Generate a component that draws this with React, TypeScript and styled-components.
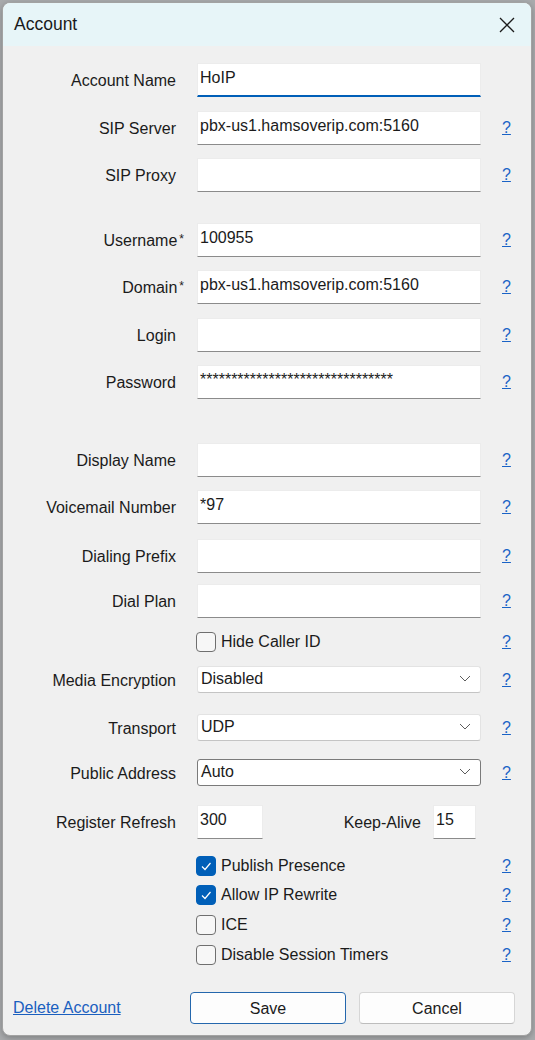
import React from 'react'
import styled, { createGlobalStyle } from 'styled-components'

const GlobalStyle = createGlobalStyle`
  html, body {
    margin: 0;
    padding: 0;
    background: #a9abad;
  }
  body {
    font-family: "Liberation Sans", Arial, sans-serif;
    color: #1b1b1b;
  }
`

const Page = styled.div`
  width: 535px;
  height: 1040px;
  box-sizing: border-box;
  padding: 2px 3px 4px 2px;
`

const Dialog = styled.div`
  height: 100%;
  box-sizing: border-box;
  background: #f0f0f0;
  border: 1px solid #a2a2a2;
  border-radius: 8px;
  overflow: hidden;
  display: flex;
  flex-direction: column;
  box-shadow: 0 2px 6px rgba(0, 0, 0, 0.25);
`

const TitleBar = styled.div`
  height: 43px;
  flex-shrink: 0;
  background: #e7f5f8;
  display: flex;
  align-items: center;
  justify-content: space-between;
  padding: 0 16px 0 11px;
  font-size: 17.5px;
`

const CloseButton = styled.div`
  width: 16px;
  height: 16px;
  display: flex;
`

const Form = styled.div`
  display: flex;
  flex-direction: column;
  padding-top: 17px;
`

const Row = styled.div<{ $mt?: number }>`
  display: grid;
  grid-template-columns: 173px 284px 1fr;
  column-gap: 21px;
  align-items: center;
  margin-top: ${({ $mt }) => $mt ?? 0}px;
`

const Label = styled.div`
  text-align: right;
  font-size: 16px;
  padding-top: 2px;
  white-space: nowrap;
`

const Required = styled.span`
  font-size: 12px;
  margin-left: 2px;
  margin-right: -8px;
  vertical-align: 3px;
`

const TextBox = styled.div<{ $focused?: boolean; $width?: number }>`
  width: ${({ $width }) => ($width ? `${$width}px` : '100%')};
  height: 34px;
  box-sizing: border-box;
  background: #fff;
  border: 1px solid #ececec;
  border-bottom: ${({ $focused }) => ($focused ? '2px solid #005fb8' : '1px solid #8b8b8b')};
  padding: 4px 2px 0;
  font-size: 16px;
  line-height: 19px;
  white-space: nowrap;
  overflow: hidden;
  flex-shrink: 0;
`

const Select = styled.div<{ $active?: boolean }>`
  height: 27px;
  box-sizing: border-box;
  background: #fff;
  border: 1px solid ${({ $active }) => ($active ? '#7a7a7a' : '#e3e3e3')};
  border-bottom-color: ${({ $active }) => ($active ? '#7a7a7a' : '#c4c4c4')};
  border-radius: 3px;
  display: flex;
  align-items: center;
  justify-content: space-between;
  padding: 0 9px 2px 3px;
  font-size: 16px;
`

const Help = styled.a`
  justify-self: start;
  font-size: 16px;
  color: #1a63c6;
  text-decoration: underline;
  cursor: pointer;
`

const Inline = styled.div`
  display: flex;
  align-items: center;
`

const InlineLabel = styled.div`
  flex: 1;
  text-align: right;
  font-size: 16px;
  padding: 2px 12px 0 0;
`

const CheckLine = styled.label`
  display: flex;
  align-items: center;
  gap: 5px;
  font-size: 16px;
  margin-left: -1px;
`

const Box = styled.span<{ $checked?: boolean }>`
  width: 20px;
  height: 20px;
  box-sizing: border-box;
  border-radius: 4px;
  border: 1px solid ${({ $checked }) => ($checked ? '#005fb8' : '#6f6f6f')};
  background: ${({ $checked }) => ($checked ? '#005fb8' : '#f7f7f7')};
  display: flex;
  align-items: center;
  justify-content: center;
`

const Footer = styled.div`
  display: grid;
  grid-template-columns: 174px 156px 156px;
  column-gap: 13px;
  align-items: center;
  margin-top: 27px;
`

const DeleteLink = styled.a`
  padding-left: 10px;
  font-size: 16px;
  color: #1a5fbf;
  text-decoration: underline;
  cursor: pointer;
`

const Button = styled.button<{ $primary?: boolean }>`
  height: 32px;
  border-radius: 4px;
  background: #fdfdfd;
  border: 1px solid ${({ $primary }) => ($primary ? '#2467ad' : '#d6d6d6')};
  border-bottom-color: ${({ $primary }) => ($primary ? '#2467ad' : '#bdbdbd')};
  font-family: inherit;
  font-size: 16px;
  color: #1b1b1b;
  padding: 1px 0 0;
`

const Chevron = () => (
  <svg width="12" height="7" viewBox="0 0 12 7">
    <polyline points="1,1 6,6 11,1" fill="none" stroke="#5c5c5c" strokeWidth="1" />
  </svg>
)

const Check = ({ checked, text }: { checked?: boolean; text: string }) => (
  <CheckLine>
    <Box $checked={checked}>
      {checked && (
        <svg width="14" height="14" viewBox="0 0 14 14">
          <polyline points="3,7.5 6,10.5 11.5,4" fill="none" stroke="#fff" strokeWidth="1.2" />
        </svg>
      )}
    </Box>
    {text}
  </CheckLine>
)

interface FieldProps {
  label: string
  value?: string
  required?: boolean
  focused?: boolean
  help?: boolean
  mt?: number
}

const Field = ({ label, value, required, focused, help = true, mt }: FieldProps) => (
  <Row $mt={mt}>
    <Label>
      {label}
      {required && <Required>*</Required>}
    </Label>
    <TextBox $focused={focused}>{value}</TextBox>
    {help ? <Help>?</Help> : <span />}
  </Row>
)

const Dropdown = ({ label, value, active, mt }: { label: string; value: string; active?: boolean; mt: number }) => (
  <Row $mt={mt}>
    <Label>{label}</Label>
    <Select $active={active}>
      {value}
      <Chevron />
    </Select>
    <Help>?</Help>
  </Row>
)

const CheckRow = ({ text, checked, mt }: { text: string; checked?: boolean; mt: number }) => (
  <Row $mt={mt}>
    <span />
    <Check text={text} checked={checked} />
    <Help>?</Help>
  </Row>
)

export default function App() {
  return (
    <Page>
      <GlobalStyle />
      <Dialog>
        <TitleBar>
          Account
          <CloseButton>
            <svg width="16" height="16" viewBox="0 0 16 16">
              <path d="M1 1 L15 15 M15 1 L1 15" stroke="#1b1b1b" strokeWidth="1.3" />
            </svg>
          </CloseButton>
        </TitleBar>
        <Form>
          <Field label="Account Name" value="HoIP" focused help={false} />
          <Field label="SIP Server" value="pbx-us1.hamsoverip.com:5160" mt={14} />
          <Field label="SIP Proxy" mt={13} />
          <Field label="Username" value="100955" required mt={31} />
          <Field label="Domain" value="pbx-us1.hamsoverip.com:5160" required mt={13} />
          <Field label="Login" mt={14} />
          <Field label="Password" value={'*'.repeat(31)} mt={13} />
          <Field label="Display Name" mt={44} />
          <Field label="Voicemail Number" value="*97" mt={13} />
          <Field label="Dialing Prefix" mt={15} />
          <Field label="Dial Plan" mt={11} />
          <CheckRow text="Hide Caller ID" mt={14} />
          <Dropdown label="Media Encryption" value="Disabled" mt={14} />
          <Dropdown label="Transport" value="UDP" mt={21} />
          <Dropdown label="Public Address" value="Auto" active mt={18} />
          <Row $mt={19}>
            <Label>Register Refresh</Label>
            <Inline>
              <TextBox $width={66}>300</TextBox>
              <InlineLabel>Keep-Alive</InlineLabel>
              <TextBox $width={43}>15</TextBox>
              <span style={{ width: 5 }} />
            </Inline>
            <span />
          </Row>
          <CheckRow text="Publish Presence" checked mt={17} />
          <CheckRow text="Allow IP Rewrite" checked mt={9} />
          <CheckRow text="ICE" mt={10} />
          <CheckRow text="Disable Session Timers" mt={10} />
          <Footer>
            <DeleteLink>Delete Account</DeleteLink>
            <Button $primary>Save</Button>
            <Button>Cancel</Button>
          </Footer>
        </Form>
      </Dialog>
    </Page>
  )
}
